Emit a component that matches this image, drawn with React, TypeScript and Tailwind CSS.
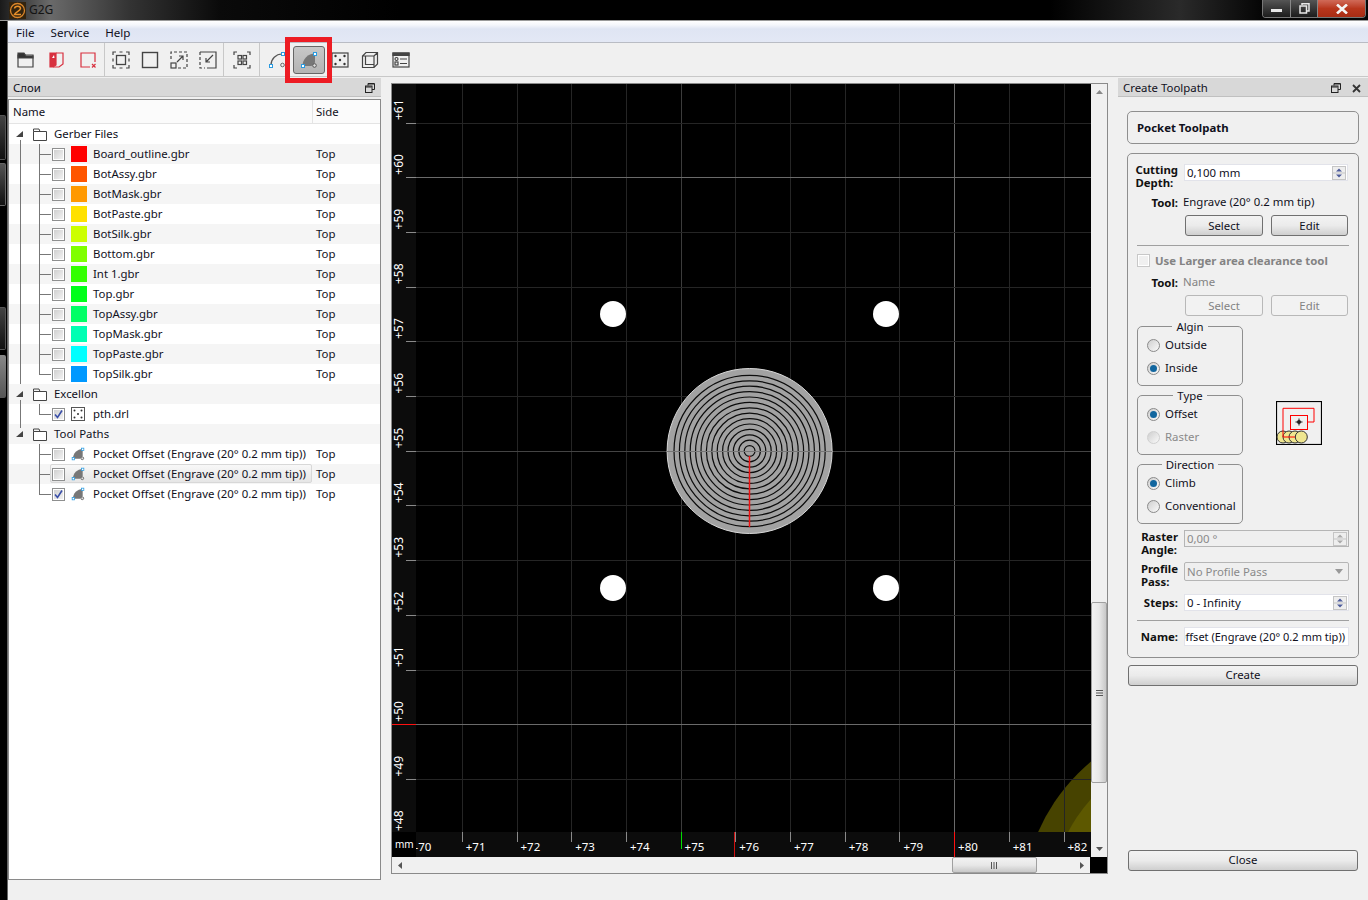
import React from "react";

const FONT = "font-['Noto_Sans','DejaVu_Sans',sans-serif]";

const gerberFiles = [
  { name: "Board_outline.gbr", color: "bg-[#ff0000]" },
  { name: "BotAssy.gbr", color: "bg-[#ff5500]" },
  { name: "BotMask.gbr", color: "bg-[#ff9900]" },
  { name: "BotPaste.gbr", color: "bg-[#ffe100]" },
  { name: "BotSilk.gbr", color: "bg-[#ccff00]" },
  { name: "Bottom.gbr", color: "bg-[#80ff00]" },
  { name: "Int 1.gbr", color: "bg-[#33ff00]" },
  { name: "Top.gbr", color: "bg-[#00ff1a]" },
  { name: "TopAssy.gbr", color: "bg-[#00ff66]" },
  { name: "TopMask.gbr", color: "bg-[#00ffb3]" },
  { name: "TopPaste.gbr", color: "bg-[#00ffff]" },
  { name: "TopSilk.gbr", color: "bg-[#0099ff]" },
];

const PITCH = 54.7;
const xTicks = Array.from({ length: 13 }, (_, i) => ({ value: 70 + i, x: 407.6 + i * PITCH }));
const yTicks = Array.from({ length: 14 }, (_, i) => ({ value: 61 - i, y: 123 + i * PITCH }));
const rings = Array.from({ length: 14 }, (_, i) => 5.4 * (i + 1));

const Stroke = ({ children }: { children: React.ReactNode }) => (
  <svg width="18" height="18" viewBox="0 0 18 18" fill="none" stroke="#444" strokeWidth="1.2">
    {children}
  </svg>
);

const PocketGlyph = ({ size = 18 }: { size?: number }) => (
  <svg width={size} height={size} viewBox="0 0 18 18" fill="none">
    <path d="M2.5 15 C2.5 8 8 2.5 15 2.5 L15 11.5 L11.5 15 Z" fill="#777" />
    <rect x="1.5" y="13.5" width="3" height="3" fill="#fff" stroke="#2b9be0" />
    <rect x="13.5" y="1.5" width="3" height="3" fill="#fff" stroke="#2b9be0" />
    <circle cx="14.5" cy="14.5" r="1.8" fill="#ddd" stroke="#555" />
  </svg>
);

const toolbarGroups: { width: string; icon: React.ReactNode; active?: boolean }[][] = [
  [
    {
      width: "w-[31px]",
      icon: (
        <Stroke>
          <path d="M1 4 H16 V16 H1 Z" />
          <path d="M1 2 H7 L9 5 H16 V7 H1 Z" fill="#333" />
        </Stroke>
      ),
    },
    {
      width: "w-[31px]",
      icon: (
        <svg width="18" height="18" viewBox="0 0 18 18" fill="none" stroke="#d8303f" strokeWidth="1.2">
          <path d="M2 2 H8 V14 L5 16 H2 Z" fill="#d8303f" />
          <path d="M8 2 H15 V13 L11 16 H5" />
          <path d="M4 7 L6 4 L6.5 7 Z" fill="#fff" stroke="none" />
        </svg>
      ),
    },
    {
      width: "w-[31px]",
      icon: (
        <svg width="18" height="18" viewBox="0 0 18 18" fill="none" stroke="#d8303f" strokeWidth="1.2">
          <path d="M11 16 H2 V2 H16 V11" />
          <path d="M13 13 L16.5 16.5 M16.5 13 L13 16.5" />
        </svg>
      ),
    },
  ],
  [
    {
      width: "w-[29px]",
      icon: (
        <Stroke>
          <rect x="4.5" y="4.5" width="9" height="9" strokeWidth="1.3" />
          <path d="M1 4 V1 H4 M14 1 H17 V4 M17 14 V17 H14 M4 17 H1 V14 M7.5 1 H10.5 M7.5 17 H10.5 M1 7.5 V10.5 M17 7.5 V10.5" />
        </Stroke>
      ),
    },
    {
      width: "w-[29px]",
      icon: (
        <Stroke>
          <rect x="1.5" y="1.5" width="15" height="15" strokeWidth="1.4" />
        </Stroke>
      ),
    },
    {
      width: "w-[29px]",
      icon: (
        <Stroke>
          <path d="M1 8 V1 H17 V17 H8" strokeDasharray="3 2" />
          <rect x="1" y="12" width="5" height="5" />
          <path d="M7 11 L13 5 M9 5 H13 V9" />
        </Stroke>
      ),
    },
    {
      width: "w-[29px]",
      icon: (
        <Stroke>
          <path d="M1 1 H17 V17 H8" />
          <path d="M1 1 V17 H6" strokeDasharray="3 2" />
          <path d="M14 4 L7 11 M7 7 V11 H11" />
        </Stroke>
      ),
    },
  ],
  [
    {
      width: "w-[33px]",
      icon: (
        <Stroke>
          <rect x="5" y="4.5" width="3.5" height="3.5" />
          <rect x="10" y="4.5" width="3.5" height="3.5" />
          <rect x="5" y="10" width="3.5" height="3.5" />
          <rect x="10" y="10" width="3.5" height="3.5" />
          <path d="M1 4 V1 H4 M14 1 H17 V4 M17 14 V17 H14 M4 17 H1 V14" />
        </Stroke>
      ),
    },
  ],
  [
    {
      width: "w-[32px]",
      icon: (
        <svg width="18" height="18" viewBox="0 0 18 18" fill="none">
          <path d="M3 14 C3 8 8 3 14 3" stroke="#555" strokeWidth="1.2" />
          <rect x="1.5" y="13.5" width="3" height="3" fill="#fff" stroke="#2b9be0" />
          <rect x="13.5" y="1.5" width="3" height="3" fill="#fff" stroke="#2b9be0" />
          <circle cx="14.5" cy="14" r="1.8" stroke="#666" />
        </svg>
      ),
    },
    { width: "w-[32px]", active: true, icon: <PocketGlyph /> },
    {
      width: "w-[30px]",
      icon: (
        <Stroke>
          <rect x="1" y="2" width="16" height="14" />
          <g fill="#333" stroke="none">
            <circle cx="4.5" cy="5" r="1.2" />
            <circle cx="13.5" cy="5" r="1.2" />
            <circle cx="9" cy="9" r="1.2" />
            <circle cx="4.5" cy="13" r="1.2" />
            <circle cx="13.5" cy="13" r="1.2" />
          </g>
        </Stroke>
      ),
    },
    {
      width: "w-[30px]",
      icon: (
        <Stroke>
          <path d="M5 1.5 H16.5 V13 L13 16.5 H1.5 V5 Z M1.5 5 H13 V16.5 M13 5 L16.5 1.5 M4.5 4.5 V13.5 H13" strokeWidth="1.2" />
        </Stroke>
      ),
    },
    {
      width: "w-[31px]",
      icon: (
        <Stroke>
          <rect x="1" y="2" width="16" height="14" />
          <path d="M1 2 H17 V4.5 H1 Z" fill="#444" />
          <circle cx="4.5" cy="8" r="1.5" />
          <rect x="3" y="11" width="3" height="3" />
          <path d="M8 8 H15 M8 12.5 H15" />
        </Stroke>
      ),
    },
  ],
];

const Checkbox = ({ checked = false, disabled = false }: { checked?: boolean; disabled?: boolean }) => (
  <span
    className={`flex h-[13px] w-[13px] shrink-0 items-center justify-center border bg-white p-px ${
      disabled ? "border-[#c8c8c8]" : "border-[#8e8f8f]"
    }`}
  >
    <span
      className={`relative block h-full w-full ${
        disabled ? "bg-[#f0f0f0]" : "bg-gradient-to-br from-[#d0d0d0] to-[#f2f2f2]"
      }`}
    >
      {checked && (
        <svg className="absolute -left-px -top-px" width="11" height="11" viewBox="0 0 11 11" fill="none">
          <path d="M2 5.5 L4.5 8.5 L9 1.5" stroke="#3a4fa8" strokeWidth="1.6" />
        </svg>
      )}
    </span>
  </span>
);

const Triangle = () => (
  <svg width="8" height="7" viewBox="0 0 8 7" className="shrink-0">
    <path d="M7 0 V6 H0 Z" fill="#444" />
  </svg>
);

const FolderIcon = () => (
  <svg width="14" height="13" viewBox="0 0 14 13" fill="none" stroke="#444" className="shrink-0">
    <path d="M0.5 3.5 H13.5 V12.5 H0.5 Z" fill="#fff" />
    <path d="M0.5 3.5 V1 H6 L7 3.5" />
  </svg>
);

const DrillIcon = () => (
  <svg width="14" height="14" viewBox="0 0 14 14" fill="none" className="shrink-0">
    <rect x="0.5" y="0.5" width="13" height="13" stroke="#555" />
    <g fill="#333">
      <circle cx="3.5" cy="3.5" r="1" />
      <circle cx="10.5" cy="3.5" r="1" />
      <circle cx="7" cy="7" r="1" />
      <circle cx="3.5" cy="10.5" r="1" />
      <circle cx="10.5" cy="10.5" r="1" />
    </g>
  </svg>
);

const GroupRow = ({ label, shaded }: { label: string; shaded?: boolean }) => (
  <div className={`relative flex h-5 items-center ${shaded ? "bg-[#f5f5f5]" : "bg-white"}`}>
    <span className="ml-[7px] mr-[9px] flex w-[8px] justify-center">
      <Triangle />
    </span>
    <FolderIcon />
    <span className="ml-[7px]">{label}</span>
  </div>
);

const FileRow = ({
  name,
  icon,
  side,
  checked,
  shaded,
  highlight,
  last,
}: {
  name: string;
  icon: React.ReactNode;
  side?: string;
  checked?: boolean;
  shaded?: boolean;
  highlight?: boolean;
  last?: boolean;
}) => (
  <div className={`relative flex h-5 items-center ${shaded ? "bg-[#f5f5f5]" : "bg-white"}`}>
    <span className={`absolute left-[30px] top-0 w-px bg-[#777] ${last ? "h-[10px]" : "h-full"}`} />
    <span className="absolute left-[30px] top-[10px] h-px w-[12px] bg-[#777]" />
    {highlight && (
      <span className="absolute left-[41px] top-0 h-[19px] w-[262px] rounded-[2px] border border-[#d8d8d8] bg-gradient-to-b from-[#f8f8f8] to-[#e6e6e6]" />
    )}
    <span className="relative ml-[43px] flex w-[19px] items-center">
      <Checkbox checked={checked} />
    </span>
    <span className="relative flex w-[22px] items-center">{icon}</span>
    <span className="relative w-[223px] whitespace-nowrap">{name}</span>
    <span className="relative">{side}</span>
  </div>
);

const DockButtons = ({ close }: { close?: boolean }) => (
  <div className="flex items-center">
    <svg width="10" height="10" viewBox="0 0 10 10" fill="none" stroke="#222">
      <path d="M3 2.5 V0.5 H9.5 V6.5 H7" />
      <rect x="0.5" y="3" width="6.5" height="6.5" />
      <path d="M3 1 H9 M1 4 H6.5" />
    </svg>
    {close && (
      <svg className="ml-[11px]" width="9" height="9" viewBox="0 0 9 9" stroke="#333" strokeWidth="1.8">
        <path d="M1 1 L8 8 M8 1 L1 8" />
      </svg>
    )}
  </div>
);

const Button = ({ label, disabled, className = "" }: { label: string; disabled?: boolean; className?: string }) => (
  <div
    className={`flex items-center justify-center rounded-[3px] border ${
      disabled
        ? "border-[#b8b8b8] bg-[#f2f2f2] text-[#838383]"
        : "border-[#707070] bg-gradient-to-b from-[#f3f3f3] via-[#ebebeb] to-[#cfcfcf]"
    } ${className}`}
  >
    {label}
  </div>
);

const Spinner = ({ disabled }: { disabled?: boolean }) => (
  <div className="mr-px flex h-[14px] w-[14px] flex-col border border-[#c5c5c5] bg-[#eeeeee]">
    <svg width="12" height="12" viewBox="0 0 12 12" fill={disabled ? "#aaa" : "#4d5b9a"}>
      <path d="M3 4.5 L6 1.5 L9 4.5 Z M3 7.5 H9 L6 10.5 Z" />
      <path d="M0 6 H12" stroke="#c5c5c5" />
    </svg>
  </div>
);

const Field = ({
  value,
  disabled,
  spin,
  className = "",
}: {
  value: string;
  disabled?: boolean;
  spin?: boolean;
  className?: string;
}) => (
  <div
    className={`flex flex-1 items-center justify-between overflow-hidden border pl-[2px] ${
      disabled ? "border-[#b5b5b5] bg-[#efefef] text-[#8a8a8a]" : "border-[#e2e3ea] bg-white"
    } ${className}`}
  >
    <span className="whitespace-nowrap">{value}</span>
    {spin && <Spinner disabled={disabled} />}
  </div>
);

const Radio = ({ label, checked, disabled }: { label: string; checked?: boolean; disabled?: boolean }) => (
  <div className={`flex h-[14px] items-center ${disabled ? "text-[#8a8a8a]" : ""}`}>
    <span
      className={`flex h-[13px] w-[13px] items-center justify-center rounded-full border bg-gradient-to-br from-[#cfcfcf] to-[#fafafa] ${
        disabled ? "border-[#d0d0d0]" : "border-[#8a8a8a]"
      }`}
    >
      {checked && <span className="h-[7px] w-[7px] rounded-full bg-[#11669f]" />}
    </span>
    <span className="ml-[5px]">{label}</span>
  </div>
);

const Group = ({ title, children }: { title: string; children: React.ReactNode }) => (
  <div className="relative flex h-[60px] w-[106px] flex-col gap-[9px] rounded-[5px] border border-[#8f8f8f] pl-[9px] pt-[11px]">
    <span className="absolute left-0 right-0 top-[-7px] flex justify-center leading-[14px]">
      <span className="bg-[#f0f0f0] px-[4px]">{title}</span>
    </span>
    {children}
  </div>
);

const RowLabel = ({ lines, className = "" }: { lines: string[]; className?: string }) => (
  <div className={`flex w-[41px] shrink-0 justify-end font-bold text-[#111] ${className}`}>
    <div className="leading-[13px]">
      {lines.map((l) => (
        <div key={l}>{l}</div>
      ))}
    </div>
  </div>
);

const ToolpathPreview = () => (
  <svg width="46" height="44" viewBox="0 0 46 44" fill="none">
    <rect x="0.5" y="0.5" width="45" height="43" stroke="#000" strokeWidth="1.2" />
    {[7, 13, 19, 25.3].map((cx) => (
      <circle key={cx} cx={cx} cy="36" r="6" fill="#efe68f" stroke="#333" />
    ))}
    <path d="M19 36 H7 V7.3 H38 V21 H31" stroke="#f00" />
    <rect x="14.5" y="14.5" width="17" height="14" stroke="#f00" />
    <path d="M23 17.5 V24.5 M19.5 21 H26.5" stroke="#222" />
    <circle cx="23" cy="21" r="2" fill="#222" />
  </svg>
);

const CadCanvas = () => (
  <svg width="699" height="773" viewBox="392 84 699 773" className="block">
    <defs>
      <clipPath id="plot">
        <rect x="416" y="84" width="675" height="748" />
      </clipPath>
      <clipPath id="rulerX">
        <rect x="416" y="832" width="675" height="25" />
      </clipPath>
    </defs>
    <rect x="392" y="84" width="699" height="773" fill="#000" />
    <g clipPath="url(#plot)">
      <circle cx="1214" cy="909" r="192" fill="#474300" />
      <circle cx="1214" cy="909" r="165" fill="#5d5800" />
      {xTicks.map((t) => (
        <line
          key={t.value}
          x1={Math.floor(t.x) + 0.5}
          x2={Math.floor(t.x) + 0.5}
          y1="84"
          y2="832"
          stroke={t.value === 80 ? "#6a6a6a" : t.value === 75 ? "#3c3c3c" : "#252525"}
        />
      ))}
      {yTicks.map((t) => (
        <line
          key={t.value}
          x1="416"
          x2="1091"
          y1={Math.floor(t.y) + 0.5}
          y2={Math.floor(t.y) + 0.5}
          stroke={t.value === 60 || t.value === 50 ? "#6a6a6a" : t.value === 55 ? "#444" : "#252525"}
        />
      ))}
      <circle cx="749.6" cy="451" r="82.5" fill="#a2a2a2" stroke="#d8d8d8" />
      {rings.map((r) => (
        <circle key={r} cx="749.6" cy="451" r={r} fill="none" stroke="#0c0c0c" strokeWidth="1.2" />
      ))}
      <line x1="667" x2="832" y1="451.5" y2="451.5" stroke="#777" />
      <line x1="749.5" x2="749.5" y1="456" y2="527" stroke="#f01010" strokeWidth="1.5" />
      {[
        [613, 314],
        [886, 314],
        [613, 588],
        [886, 588],
      ].map(([cx, cy]) => (
        <circle key={`${cx}-${cy}`} cx={cx} cy={cy} r="13" fill="#fff" />
      ))}
    </g>

    {/* rulers */}
    <rect x="392" y="84" width="24" height="748" fill="#0c0c0c" />
    <rect x="416" y="832" width="675" height="25" fill="#0c0c0c" />
    <rect x="392" y="832" width="24" height="25" fill="#000" />
    {yTicks.map((t) => (
      <g key={t.value}>
        {t.value !== 48 && (
          <line
            x1={t.value === 50 ? 392 : 406}
            x2="416"
            y1={Math.floor(t.y) + 0.5}
            y2={Math.floor(t.y) + 0.5}
            stroke={t.value === 50 ? "#ff1010" : "#8a8a8a"}
          />
        )}
        <text
          x="0"
          y="0"
          transform={`translate(403 ${t.y - 3}) rotate(-90)`}
          fill="#fff"
          fontSize="12"
          fontFamily="Noto Sans, sans-serif"
        >
          +{t.value}
        </text>
      </g>
    ))}
    <g clipPath="url(#rulerX)">
      {xTicks.map((t) => (
        <g key={t.value}>
          {t.value !== 70 && (
            <line
              x1={Math.floor(t.x) + 0.5}
              x2={Math.floor(t.x) + 0.5}
              y1="832"
              y2={t.value === 75 ? 849 : t.value === 80 ? 857 : 842}
              stroke={t.value === 75 ? "#00e000" : t.value === 80 ? "#ff1010" : "#8a8a8a"}
            />
          )}
          <text
            x={t.value === 70 ? 414.5 : t.x + 3.5}
            y="851"
            fill="#fff"
            fontSize="11.5"
            fontFamily="Noto Sans, sans-serif"
          >
            {t.value === 70 ? "-70" : `+${t.value}`}
          </text>
        </g>
      ))}
      <line x1="734.5" x2="734.5" y1="832" y2="857" stroke="#d01010" />
    </g>
    <text x="395" y="848" fill="#fff" fontSize="10" fontFamily="Noto Sans, sans-serif">
      mm
    </text>
  </svg>
);

const VerticalScrollbar = () => (
  <div className="flex w-[16px] flex-col bg-[#f0f0f0]">
    <div className="flex h-[16px] items-center justify-center">
      <svg width="7" height="4" viewBox="0 0 7 4">
        <path d="M0 4 L3.5 0 L7 4 Z" fill="#888" />
      </svg>
    </div>
    <div className="h-[502px]" />
    <div className="flex h-[181px] items-center justify-center rounded-[2px] border border-[#a0a0a0] bg-gradient-to-r from-[#f2f2f2] via-[#e8e8e8] to-[#c8c8c8]">
      <svg width="7" height="6" viewBox="0 0 7 6" stroke="#555">
        <path d="M0 0.5 H7 M0 3 H7 M0 5.5 H7" />
      </svg>
    </div>
    <div className="flex-1" />
    <div className="flex h-[16px] items-center justify-center">
      <svg width="7" height="4" viewBox="0 0 7 4">
        <path d="M0 0 L3.5 4 L7 0 Z" fill="#555" />
      </svg>
    </div>
  </div>
);

const HorizontalScrollbar = () => (
  <div className="flex h-[16px] bg-[#f0f0f0]">
    <div className="flex w-[16px] items-center justify-center">
      <svg width="4" height="7" viewBox="0 0 4 7">
        <path d="M4 0 L0 3.5 L4 7 Z" fill="#555" />
      </svg>
    </div>
    <div className="w-[544px]" />
    <div className="flex w-[85px] items-center justify-center rounded-[2px] border border-[#a0a0a0] bg-gradient-to-b from-[#f2f2f2] via-[#e8e8e8] to-[#c8c8c8]">
      <svg width="7" height="7" viewBox="0 0 7 7" stroke="#555">
        <path d="M0.5 0 V7 M3 0 V7 M5.5 0 V7" />
      </svg>
    </div>
    <div className="flex-1" />
    <div className="flex w-[16px] items-center justify-center">
      <svg width="4" height="7" viewBox="0 0 4 7">
        <path d="M0 0 L4 3.5 L0 7 Z" fill="#555" />
      </svg>
    </div>
    <div className="w-[17px] bg-black" />
  </div>
);

export default function App() {
  return (
    <div className={`relative flex h-[900px] w-[1368px] flex-col overflow-hidden bg-black text-[11.4px] leading-[16px] text-[#10101c] ${FONT}`}>
      {/* Title bar */}
      <div className="flex h-[21px] items-start border-b border-[#9a9a9a] bg-[linear-gradient(90deg,#1a1a1a_0px,#6a6a6a_50px,#333_130px,#0a0a0a_220px,#000_400px,#000_1050px,#2a2a2a_1180px,#050505_1262px)]">
        <svg className="ml-[9px] mt-[2px]" width="17" height="17" viewBox="0 0 17 17" fill="none">
          <rect width="17" height="17" fill="#33240f" />
          <circle cx="8.5" cy="8.5" r="7" stroke="#d9852a" strokeWidth="1.3" />
          <path d="M5.5 6.5 C6 3.5 11.5 3.5 11.5 6.5 C11.5 9 6.5 10 5.5 12.5 H12" stroke="#e8902a" strokeWidth="1.5" />
        </svg>
        <span className="ml-[3px] mt-[2px] text-[12px] text-[#141414]">G2G</span>
        <div className="ml-auto mr-[2px] flex h-[18px] w-[104px] overflow-hidden rounded-b-[4px] border border-t-0 border-[#777]">
          <div className="flex w-[28px] items-center justify-center border-r border-[#888] bg-gradient-to-b from-[#555] to-[#1c1c1c]">
            <span className="mt-[3px] h-[3px] w-[11px] bg-[#e8e8e8]" />
          </div>
          <div className="flex w-[27px] items-center justify-center border-r border-[#888] bg-gradient-to-b from-[#555] to-[#1c1c1c]">
            <svg width="11" height="11" viewBox="0 0 11 11" fill="none" stroke="#e8e8e8" strokeWidth="1.5">
              <path d="M3 2 V0.8 H10 V8 H8" />
              <rect x="1" y="3" width="6.5" height="7" />
            </svg>
          </div>
          <div className="flex flex-1 items-center justify-center bg-gradient-to-b from-[#d06a58] via-[#b8361c] to-[#a82c14]">
            <svg width="14" height="10" viewBox="0 0 14 10" stroke="#f4f4f4" strokeWidth="2.6">
              <path d="M2 0.5 L12 9.5 M12 0.5 L2 9.5" />
            </svg>
          </div>
        </div>
      </div>

      <div className="flex flex-1">
        {/* Sliver of the desktop behind the window */}
        <div className="flex w-[8px] flex-col border-r border-[#666] bg-black">
          <div className="mt-[94px] h-[45px] w-[6px] rounded-r-[2px] border border-l-0 border-[#555] bg-gradient-to-b from-[#444] to-[#111]" />
          <div className="mt-[3px] h-[43px] w-[6px] rounded-r-[2px] border border-l-0 border-[#666] bg-gradient-to-b from-[#555] to-[#111]" />
          <div className="mt-[101px] h-[43px] w-[6px] rounded-r-[2px] border border-l-0 border-[#555] bg-gradient-to-b from-[#444] to-[#111]" />
          <div className="mt-[5px] h-[43px] w-[6px] rounded-r-[2px] bg-gradient-to-b from-[#888] to-[#555]" />
        </div>

        <div className="flex flex-1 flex-col bg-[#f0f0f0]">
          {/* Menu */}
          <div className="flex h-[22px] items-center gap-[16px] border-b border-[#b9bcc4] bg-[linear-gradient(180deg,#ffffff_0px,#f4f6fb_4px,#dfe5f3_8px,#e3e8f5_100%)] pl-[8px] pt-[2px] text-[11.6px]">
            <span>File</span>
            <span>Service</span>
            <span>Help</span>
          </div>

          {/* Toolbar */}
          <div className="flex h-[34px] items-center border-b border-[#c8c8c8] pl-[2px]">
            {toolbarGroups.map((group, i) => (
              <React.Fragment key={i}>
                {i > 0 && <span className="mx-[1px] h-[33px] w-px bg-[#c8c8c8]" />}
                {group.map((b, j) => (
                  <div key={j} className={`flex h-[28px] items-center justify-center ${b.width}`}>
                    <div
                      className={`flex h-[28px] w-[32px] shrink-0 items-center justify-center rounded-[3px] ${
                        b.active ? "border border-[#666] bg-gradient-to-b from-[#c8c8c8] to-[#b4b4b4]" : ""
                      }`}
                    >
                      {b.icon}
                    </div>
                  </div>
                ))}
              </React.Fragment>
            ))}
          </div>

          <div className="flex flex-1">
            {/* Layers */}
            <div className="flex w-[373px] flex-col pt-[1px]">
              <div className="flex h-[19px] items-center justify-between border-b border-[#c0c0c0] bg-[#d8d8d8] pl-[5px] pr-[6px] pt-[2px]">
                <span>Слои</span>
                <DockButtons />
              </div>
              <div className="mt-[2px] h-[781px] border border-[#8a8a8a] bg-white">
                <div className="flex h-[24px] items-center border-b border-[#e4e4e4] bg-[#fbfbfb] pl-[4px]">
                  <span className="w-[299px]">Name</span>
                  <span className="h-full w-px bg-[#e4e4e4]" />
                  <span className="ml-[3px]">Side</span>
                </div>
                <div className="relative">
                  <span className="absolute left-[11px] top-[16px] z-10 h-[244px] w-px bg-[#777]" />
                  <span className="absolute left-[11px] top-[276px] z-10 h-[28px] w-px bg-[#777]" />
                  <GroupRow label="Gerber Files" />
                  {gerberFiles.map((f, i) => (
                    <FileRow
                      key={f.name}
                      name={f.name}
                      side="Top"
                      shaded={i % 2 === 0}
                      icon={<span className={`block h-4 w-4 ${f.color}`} />}
                      last={i === gerberFiles.length - 1}
                    />
                  ))}
                  <GroupRow label="Excellon" shaded />
                  <FileRow name="pth.drl" checked icon={<DrillIcon />} last />
                  <GroupRow label="Tool Paths" shaded />
                  <FileRow name="Pocket Offset (Engrave (20° 0.2 mm tip))" side="Top" icon={<PocketGlyph size={14} />} />
                  <FileRow name="Pocket Offset (Engrave (20° 0.2 mm tip))" side="Top" shaded highlight icon={<PocketGlyph size={14} />} />
                  <FileRow name="Pocket Offset (Engrave (20° 0.2 mm tip))" side="Top" checked icon={<PocketGlyph size={14} />} last />
                </div>
              </div>
            </div>

            {/* Canvas */}
            <div className="ml-[10px] mt-[6px] flex h-[791px] w-[717px] flex-col border border-[#8a8a8a] bg-white">
              <div className="flex">
                <CadCanvas />
                <VerticalScrollbar />
              </div>
              <HorizontalScrollbar />
            </div>

            {/* Create Toolpath */}
            <div className="ml-[10px] flex w-[250px] flex-col pt-[1px]">
              <div className="flex h-[19px] items-center justify-between border-b border-[#c0c0c0] bg-[#d8d8d8] pl-[5px] pr-[7px] pt-[2px]">
                <span>Create Toolpath</span>
                <DockButtons close />
              </div>
              <div className="ml-[9px] mt-[14px] flex h-[33px] w-[232px] items-center rounded-[5px] border border-[#8f8f8f] pl-[9px] pt-[1px] font-bold">
                Pocket Toolpath
              </div>
              <div className="ml-[9px] mt-[9px] h-[505px] w-[232px] rounded-[5px] border border-[#8f8f8f] px-[9px] pt-[10px]">
                <div className="flex h-[26px] items-start">
                  <RowLabel lines={["Cutting", "Depth:"]} className="-mt-px" />
                  <Field value="0,100 mm" spin className="ml-[6px] mr-px h-[17px]" />
                </div>
                <div className="mt-[4px] flex h-[16px] items-center">
                  <RowLabel lines={["Tool:"]} />
                  <span className="ml-[5px]">Engrave (20° 0.2 mm tip)</span>
                </div>
                <div className="ml-[48px] mt-[5px] flex gap-[8px]">
                  <Button label="Select" className="h-[21px] w-[78px]" />
                  <Button label="Edit" className="h-[21px] w-[77px]" />
                </div>
                <div className="mt-[9px] h-px bg-[#a0a0a0]" />
                <div className="mt-[8px] flex h-[13px] items-center font-bold text-[#838383]">
                  <Checkbox disabled />
                  <span className="ml-[5px]">Use Larger area clearance tool</span>
                </div>
                <div className="mt-[7px] flex h-[16px] items-center">
                  <RowLabel lines={["Tool:"]} />
                  <span className="ml-[5px] text-[#838383]">Name</span>
                </div>
                <div className="ml-[48px] mt-[5px] flex gap-[8px]">
                  <Button label="Select" disabled className="h-[21px] w-[78px]" />
                  <Button label="Edit" disabled className="h-[21px] w-[77px]" />
                </div>
                <div className="mt-[10px] flex">
                  <div className="flex w-[106px] flex-col gap-[9px]">
                    <Group title="Algin">
                      <Radio label="Outside" />
                      <Radio label="Inside" checked />
                    </Group>
                    <Group title="Type">
                      <Radio label="Offset" checked />
                      <Radio label="Raster" disabled />
                    </Group>
                    <Group title="Direction">
                      <Radio label="Climb" checked />
                      <Radio label="Conventional" />
                    </Group>
                  </div>
                  <div className="ml-[33px] pt-[75px]">
                    <ToolpathPreview />
                  </div>
                </div>
                <div className="mt-[6px] flex h-[26px] items-start">
                  <RowLabel lines={["Raster", "Angle:"]} />
                  <Field value="0,00 °" disabled spin className="ml-[6px] h-[17px]" />
                </div>
                <div className="mt-[6px] flex h-[26px] items-start">
                  <RowLabel lines={["Profile", "Pass:"]} />
                  <div className="ml-[6px] flex h-[19px] flex-1 items-center justify-between rounded-[2px] border border-[#b5b5b5] bg-[#efefef] pl-[2px] pr-[5px] text-[#8a8a8a]">
                    <span>No Profile Pass</span>
                    <svg width="8" height="5" viewBox="0 0 8 5">
                      <path d="M0 0 H8 L4 5 Z" fill="#999" />
                    </svg>
                  </div>
                </div>
                <div className="mt-[6px] flex h-[17px] items-center">
                  <RowLabel lines={["Steps:"]} />
                  <Field value="0 - Infinity" spin className="ml-[6px] h-[17px]" />
                </div>
                <div className="mt-[9px] h-px bg-[#a0a0a0]" />
                <div className="mt-[6px] flex h-[19px] items-center">
                  <RowLabel lines={["Name:"]} />
                  <div className="ml-[6px] flex h-[19px] flex-1 items-center justify-end overflow-hidden border border-[#e2e3ea] bg-white pr-[3px] text-[11px]">
                    <span className="whitespace-nowrap">Pocket Offset (Engrave (20° 0.2 mm tip))</span>
                  </div>
                </div>
              </div>
              <Button label="Create" className="ml-[10px] mt-[7px] h-[21px] w-[230px] pb-px" />
              <Button label="Close" className="ml-[10px] mt-[164px] h-[21px] w-[230px] pb-px" />
            </div>
          </div>
        </div>
      </div>

      {/* Red annotation around the pocket tool button */}
      <div className="pointer-events-none absolute left-[285px] top-[37px] h-[46px] w-[47px] border-[5px] border-[#ed1c24]" />
    </div>
  );
}
